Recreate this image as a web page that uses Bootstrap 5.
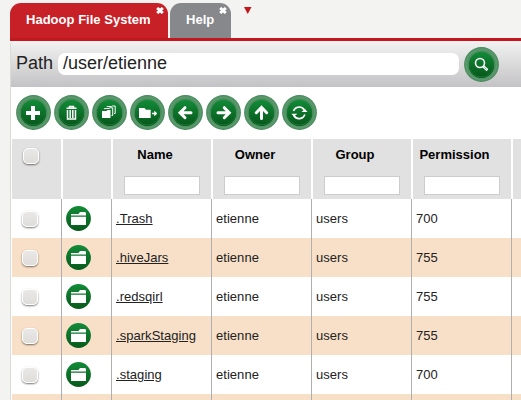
<!DOCTYPE html>
<html lang="en">
<head>
<meta charset="utf-8">
<title>Hadoop File System</title>
<link href="https://cdn.jsdelivr.net/npm/bootstrap@5.3.0/dist/css/bootstrap.min.css" rel="stylesheet">
<style>
body{background:#f3f3f1;font:13px/15px "Liberation Sans",Arial,sans-serif;color:#222;height:400px}
.tabs{height:38px;padding:3px 0 0 10px;gap:2px}
.tab-item{height:35px;background:#c72127;color:#fff;font-weight:700;border-radius:11px 11px 0 0;padding:9px 0 0 16px;width:158px;white-space:nowrap;letter-spacing:.02px}
.tab-item.help{background:#87888b;width:61px}
.tab-close{top:4px;right:4px;width:8px;height:7px}
.tab-more{margin:4px 0 0 11px}
.panel{margin-left:10px;width:511px;height:362px;border-top:3px solid #c4161c}
.panel-body{border-left:1px solid #dcdcd6;background:#fff;height:359px;border-top-left-radius:4px}
.pathbar{height:46px;background:linear-gradient(#f2f2f2,#c3c3c5);padding-left:5px;font-size:18px;line-height:22px;border-top-left-radius:4px}
.pathbar label{padding-bottom:2px}
.path-input{width:401px;height:22px;border-radius:7px;border:0;padding:0 5px 1px;margin-left:5px;margin-right:5px;color:#222;background:#fff;line-height:21px}
.round{width:35px;height:35px;padding:0;border:0;background:none;line-height:0}
.round svg{display:block}
.tools{height:52px;padding:8px 0 0 5px;gap:3px}
.files{table-layout:fixed;width:600px;margin:0 0 0 1px;border-collapse:separate;border-spacing:0;--bs-table-bg:transparent}
.files.table>:not(caption)>*>*{border-width:0;box-shadow:none}
.files.table>thead>tr>th{height:60px;background:#e1e1e1;border-left:1px solid #fff;border-right:1px solid #fff;color:#000;vertical-align:top;padding:8px 11px 0;text-align:center}
.files.table>thead>tr>th:first-child{border-left:0}
.files.table>tbody>tr>td{height:39px;padding:0 4px;border-right:1px solid #afafaf;vertical-align:middle;color:#222;letter-spacing:.04px}
.files.table>tbody>tr:nth-child(even)>td{background:#f8e0c8}
.files a{color:#222;text-decoration:underline}
.sort-label{width:62px;white-space:nowrap;display:block;height:29px}
.sort-label.wide{margin-left:-5px;width:71px}
.filter{width:76px;height:19px;border:1px solid #ccc;border-radius:0;background:#fff;padding:0;display:block}
.check{appearance:none;display:block;width:16px;height:16px;margin:0 0 0 5.5px;border-radius:5px;border:1px solid #fff;background:linear-gradient(#e9e8e6,#dfddda);box-shadow:0 1px 2px #0008}
th .check{margin:1px 0 0 0}
</style>
</head>
<body class="overflow-hidden">
<svg width="0" height="0" class="position-absolute">
<defs>
<linearGradient id="disc" x2="0" y2="1"><stop stop-color="#128b38"/><stop offset="1" stop-color="#07591b"/></linearGradient>
<radialGradient id="ring"><stop offset=".7" stop-color="#3f8554"/><stop offset=".88" stop-color="#5c9b6e"/><stop offset="1" stop-color="#438659"/></radialGradient>
<symbol id="base" viewBox="0 0 35 35"><circle cx="17.5" cy="17.5" r="17.4" fill="url(#ring)"/><circle cx="17.5" cy="18.5" r="12.5" fill="#053f12"/><circle cx="17.5" cy="18" r="12.4" fill="#17883a"/><circle cx="17.5" cy="17.3" r="12.3" fill="url(#disc)"/></symbol>
<symbol id="folder" viewBox="0 0 25 25"><circle cx="12.5" cy="12.5" r="12.4" fill="url(#disc)"/><path fill="#fff" d="M5 9.500V8H12.500L14 6H19.200L20 7V9.500ZM5 10.700H20V19H5Z"/></symbol>
<symbol id="close" viewBox="0 0 8 7"><path d="M1.200 1 6.800 6M6.800 1 1.200 6" stroke="#fff" stroke-width="3"/></symbol>
</defs>
</svg>

<nav class="tabs d-flex">
<div class="tab-item position-relative">Hadoop File System<svg class="tab-close position-absolute"><use href="#close"/></svg></div>
<div class="tab-item help position-relative">Help<svg class="tab-close position-absolute"><use href="#close"/></svg></div>
<svg class="tab-more" width="8" height="8"><path d="M0 0H7.500L3.750 7Z" fill="#c4161c"/></svg>
</nav>

<main class="panel">
<div class="panel-body overflow-hidden">
<div class="pathbar d-flex align-items-center">
<label for="path">Path</label><input id="path" class="path-input" value="/user/etienne">
<button class="round" aria-label="Go"><svg width="35" height="35"><use href="#base"/><circle cx="16" cy="16" r="4.500" fill="none" stroke="#fff" stroke-width="1.600"/><path d="m19.500 19.500 4 3.700" stroke="#fff" stroke-width="2.600"/><path d="m20.500 20.500 2 1.800" stroke="#16813a" stroke-width=".7"/></svg></button>
</div>
<div class="tools d-flex">
<button class="round" aria-label="New"><svg width="35" height="35"><use href="#base"/><path d="M17 11V25M10 18H24" stroke="#fff" stroke-width="4"/></svg></button>
<button class="round" aria-label="Delete"><svg width="35" height="35"><use href="#base"/><path d="M12.500 13.200H22.500M15.500 12.500V11.500H19.500V12.500M13.500 15V24H21.500V15M16.200 15V23M18.800 15V23" fill="none" stroke="#fff" stroke-width="1.500"/></svg></button>
<button class="round" aria-label="Copy"><svg width="35" height="35"><use href="#base"/><path d="M10 16H14.500L15.500 15H18.500V23H10Z" fill="#fff"/><path d="M12.500 14.200V13.500H17L18 12.800H20.700V20.500H19.500M15 12V11.500H19.500L20.500 11H23.200V18.500H22" fill="none" stroke="#fff"/></svg></button>
<button class="round" aria-label="Move"><svg width="35" height="35"><use href="#base"/><path d="M9 13H14.500L16 14.700H20.700V23H9Z" fill="#fff"/><path d="M22 18.500H26M24.300 16.500 26.300 18.500 24.300 20.500" fill="none" stroke="#fff" stroke-width="1.300"/></svg></button>
<button class="round" aria-label="Back"><svg width="35" height="35"><use href="#base"/><path d="M12.500 17.700H23M17 12.700 12 17.700 17 22.700" fill="none" stroke="#fff" stroke-width="3" stroke-linecap="round"/></svg></button>
<button class="round" aria-label="Forward"><svg width="35" height="35"><use href="#base"/><path d="M12 17.700H23M18.300 12.700 23.300 17.700 18.300 22.700" fill="none" stroke="#fff" stroke-width="3" stroke-linecap="round"/></svg></button>
<button class="round" aria-label="Up"><svg width="35" height="35"><use href="#base"/><path d="M17.500 12.500V23.500M12.300 17.700 17.500 12.300 22.700 17.700" fill="none" stroke="#fff" stroke-width="3" stroke-linecap="round"/></svg></button>
<button class="round" aria-label="Refresh"><svg width="35" height="35"><use href="#base"/><path d="M11.500 16A6 6 0 0 1 22.500 15.300M22.800 19.600A6 6 0 0 1 12 20.800" fill="none" stroke="#fff" stroke-width="1.700"/><path d="M19.500 17H25.500L23 14ZM9.500 18.700H15.500L11.800 21.500Z" fill="#fff"/></svg></button>
</div>
<table class="files table">
<colgroup><col style="width:50px"><col style="width:50px"><col style="width:100px"><col style="width:100px"><col style="width:100px"><col style="width:100px"><col style="width:100px"></colgroup>
<thead><tr><th><input type="checkbox" class="check"></th><th></th>
<th><span class="sort-label">Name</span><input class="filter"></th>
<th><span class="sort-label">Owner</span><input class="filter"></th>
<th><span class="sort-label">Group</span><input class="filter"></th>
<th><span class="sort-label wide">Permission</span><input class="filter"></th><th></th></tr></thead>
<tbody>
<tr><td><input type="checkbox" class="check"></td><td><svg class="d-block" width="25" height="25"><use href="#folder"/></svg></td><td><a href="#">.Trash</a></td><td>etienne</td><td>users</td><td>700</td><td></td></tr>
<tr><td><input type="checkbox" class="check"></td><td><svg class="d-block" width="25" height="25"><use href="#folder"/></svg></td><td><a href="#">.hiveJars</a></td><td>etienne</td><td>users</td><td>755</td><td></td></tr>
<tr><td><input type="checkbox" class="check"></td><td><svg class="d-block" width="25" height="25"><use href="#folder"/></svg></td><td><a href="#">.redsqirl</a></td><td>etienne</td><td>users</td><td>755</td><td></td></tr>
<tr><td><input type="checkbox" class="check"></td><td><svg class="d-block" width="25" height="25"><use href="#folder"/></svg></td><td><a href="#">.sparkStaging</a></td><td>etienne</td><td>users</td><td>755</td><td></td></tr>
<tr><td><input type="checkbox" class="check"></td><td><svg class="d-block" width="25" height="25"><use href="#folder"/></svg></td><td><a href="#">.staging</a></td><td>etienne</td><td>users</td><td>700</td><td></td></tr>
<tr><td></td><td></td><td></td><td></td><td></td><td></td><td></td></tr>
</tbody>
</table>
</div>
</main>
<script src="https://cdn.jsdelivr.net/npm/bootstrap@5.3.0/dist/js/bootstrap.bundle.min.js"></script>
</body>
</html>
